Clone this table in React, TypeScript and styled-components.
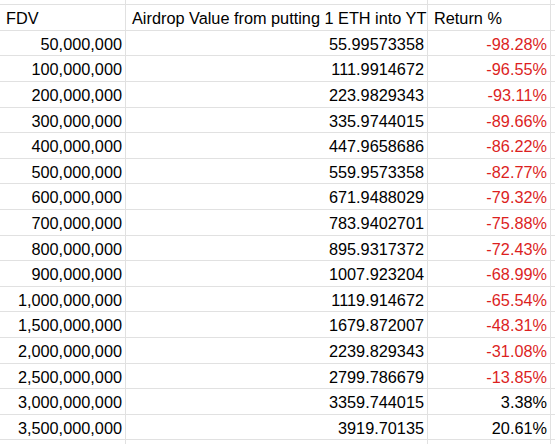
import React from "react";
import styled, { createGlobalStyle } from "styled-components";

const Global = createGlobalStyle`
  html, body { margin: 0; padding: 0; background: #fff; }
  body { font-family: "Liberation Sans", Arial, Helvetica, sans-serif; overflow: hidden; }
`;

const Sheet = styled.div`
  width: 555px;
  height: 444px;
  overflow: hidden;
  display: flex;
  flex-direction: column;
`;

const Row = styled.div<{ $h: number }>`
  display: grid;
  grid-template-columns: 126px 302px 123px 1fr;
  height: ${(p) => p.$h}px;
  flex: 0 0 auto;
  box-sizing: border-box;
  border-bottom: 1px solid #e1e1e1;
`;

const Cell = styled.div<{ $align?: "left" | "right"; $red?: boolean }>`
  box-sizing: border-box;
  border-right: 1px solid #e1e1e1;
  display: flex;
  align-items: center;
  justify-content: ${(p) => (p.$align === "right" ? "flex-end" : "flex-start")};
  padding: 2px 3px 0 6px;
  font-size: 16.3px;
  color: ${(p) => (p.$red ? "#dc1f1f" : "#000")};
  white-space: nowrap;
  overflow: hidden;
`;

const Blank = styled.div`
  box-sizing: border-box;
  border-right: 1px solid #e1e1e1;
`;

const rows: [string, string, string][] = [
  ["50,000,000", "55.99573358", "-98.28%"],
  ["100,000,000", "111.9914672", "-96.55%"],
  ["200,000,000", "223.9829343", "-93.11%"],
  ["300,000,000", "335.9744015", "-89.66%"],
  ["400,000,000", "447.9658686", "-86.22%"],
  ["500,000,000", "559.9573358", "-82.77%"],
  ["600,000,000", "671.9488029", "-79.32%"],
  ["700,000,000", "783.9402701", "-75.88%"],
  ["800,000,000", "895.9317372", "-72.43%"],
  ["900,000,000", "1007.923204", "-68.99%"],
  ["1,000,000,000", "1119.914672", "-65.54%"],
  ["1,500,000,000", "1679.872007", "-48.31%"],
  ["2,000,000,000", "2239.829343", "-31.08%"],
  ["2,500,000,000", "2799.786679", "-13.85%"],
  ["3,000,000,000", "3359.744015", "3.38%"],
  ["3,500,000,000", "3919.70135", "20.61%"],
];

// row heights alternate to average ~25.6px
const heights = [26, 25, 26, 26, 25, 26, 25, 26, 26, 25, 26, 25, 26, 26, 25, 26, 25];

export default function App() {
  return (
    <Sheet>
      <Global />
      <Row $h={5}>
        <Blank />
        <Blank />
        <Blank />
        <div />
      </Row>
      <Row $h={heights[0]}>
        <Cell>FDV</Cell>
        <Cell>Airdrop Value from putting 1 ETH into YT</Cell>
        <Cell>Return %</Cell>
        <div />
      </Row>
      {rows.map((r, i) => (
        <Row key={r[0]} $h={heights[i + 1]}>
          <Cell $align="right">{r[0]}</Cell>
          <Cell $align="right">{r[1]}</Cell>
          <Cell $align="right" $red={r[2].startsWith("-")}>
            {r[2]}
          </Cell>
          <div />
        </Row>
      ))}
      <Row $h={20}>
        <Blank />
        <Blank />
        <Blank />
        <div />
      </Row>
    </Sheet>
  );
}
